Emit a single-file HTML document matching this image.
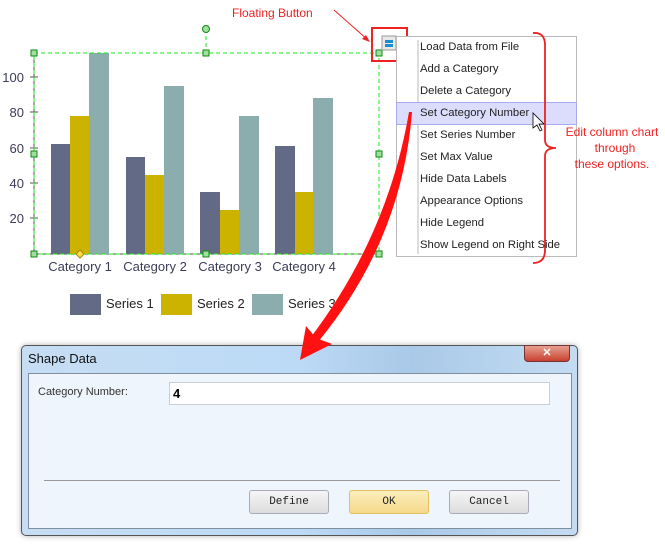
<!DOCTYPE html>
<html><head><meta charset="utf-8"><style>
html,body{margin:0;padding:0;background:#fff;}
body{width:665px;height:544px;position:relative;overflow:hidden;font-family:"Liberation Sans",sans-serif;}
.a{position:absolute;}
.mi{position:absolute;left:420px;font-size:11.3px;color:#222;}
.btn{position:absolute;top:490px;width:78px;height:22px;border:1px solid #aab;border-radius:3px;background:linear-gradient(#f6f6f6,#dcdcdc);font-family:"Liberation Mono",monospace;font-size:11px;text-align:center;line-height:22px;color:#222;}
</style></head><body>
<svg class="a" style="left:0;top:0" width="665" height="544">
<line x1="34" y1="53" x2="34" y2="254" stroke="#555"/>
<line x1="34" y1="254" x2="379" y2="254" stroke="#555"/>
<g stroke="#555"><line x1="30" y1="77" x2="38" y2="77"/><line x1="30" y1="112" x2="38" y2="112"/><line x1="30" y1="148" x2="38" y2="148"/><line x1="30" y1="183" x2="38" y2="183"/><line x1="30" y1="218" x2="38" y2="218"/></g>
<g font-size="13" fill="#3c3c58" text-anchor="end"><text x="24" y="82">100</text><text x="24" y="117">80</text><text x="24" y="153">60</text><text x="24" y="188">40</text><text x="24" y="223">20</text></g>
<rect x="51" y="144" width="19" height="110" fill="#636a86"/><rect x="70" y="116" width="19" height="138" fill="#cbb300"/><rect x="89" y="53" width="20" height="201" fill="#8badad"/>
<rect x="126" y="157" width="19" height="97" fill="#636a86"/><rect x="145" y="175" width="19" height="79" fill="#cbb300"/><rect x="164" y="86" width="20" height="168" fill="#8badad"/>
<rect x="200" y="192" width="20" height="62" fill="#636a86"/><rect x="220" y="210" width="19" height="44" fill="#cbb300"/><rect x="239" y="116" width="20" height="138" fill="#8badad"/>
<rect x="275" y="146" width="20" height="108" fill="#636a86"/><rect x="295" y="192" width="18" height="62" fill="#cbb300"/><rect x="313" y="98" width="20" height="156" fill="#8badad"/>
<g font-size="13" fill="#3c3c58" text-anchor="middle"><text x="80" y="271">Category 1</text><text x="155" y="271">Category 2</text><text x="230" y="271">Category 3</text><text x="304" y="271">Category 4</text></g>
<rect x="70" y="294" width="31" height="21" fill="#636a86"/><text x="106" y="308" font-size="13" fill="#222">Series 1</text>
<rect x="161" y="294" width="31" height="21" fill="#cbb300"/><text x="197" y="308" font-size="13" fill="#222">Series 2</text>
<rect x="252" y="294" width="31" height="21" fill="#8badad"/><text x="288" y="308" font-size="13" fill="#222">Series 3</text>
<g stroke="#11ee11" stroke-dasharray="4,3" fill="none"><rect x="34" y="53" width="345" height="201"/><line x1="206" y1="29" x2="206" y2="53"/></g>
<g fill="#9fe09f" stroke="#118811"><rect x="31" y="50" width="6" height="6"/><rect x="203" y="50" width="6" height="6"/><rect x="376" y="50" width="6" height="6"/><rect x="31" y="151" width="6" height="6"/><rect x="376" y="151" width="6" height="6"/><rect x="31" y="251" width="6" height="6"/><rect x="203" y="251" width="6" height="6"/><rect x="376" y="251" width="6" height="6"/><circle cx="206" cy="29" r="3.5"/></g>
<path d="M80 250 L84 254 L80 258 L76 254Z" fill="#ffdd44" stroke="#aa8800"/>
<rect x="372" y="28" width="35" height="33" fill="none" stroke="#ee2222" stroke-width="2"/>
<rect x="382" y="36" width="14" height="14" fill="#e8e8e8" stroke="#999"/>
<rect x="385" y="40" width="8" height="3" fill="#1a8fd0"/><rect x="385" y="44" width="8" height="3" fill="#1a8fd0"/>
<text x="232" y="17" font-size="12" fill="#ee2222">Floating Button</text>
<line x1="334" y1="10" x2="368" y2="40" stroke="#ee2222"/><path d="M370 42 L362 39 L366 35Z" fill="#ee2222"/>
<rect x="396.5" y="36.5" width="180" height="220" fill="#fff" stroke="#bbb"/>
<line x1="418" y1="40" x2="418" y2="254" stroke="#ddd" stroke-width="2"/>
<rect x="396.5" y="102.5" width="180" height="22" fill="#dcdcfc" stroke="#aaaaf0"/>
<path d="M533 113 L533 128 L537 125 L540 131 L542 130 L539 124 L544 124Z" fill="#fff" stroke="#000" stroke-width="0.8"/>
<path d="M533 33 Q545 32 545 45 L545 140 Q545 148 556 148 Q545 148 545 156 L545 250 Q545 263 533 263" fill="none" stroke="#ee2222" stroke-width="1.8"/>
<g font-size="12" fill="#ee2222" text-anchor="middle"><text x="612" y="136">Edit column chart</text><text x="615" y="152">through</text><text x="612" y="168">these options.</text></g>
</svg>
<div class="mi" style="top:41px">Load Data from File</div>
<div class="mi" style="top:63px">Add a Category</div>
<div class="mi" style="top:85px">Delete a Category</div>
<div class="mi" style="top:107px">Set Category Number</div>
<div class="mi" style="top:129px">Set Series Number</div>
<div class="mi" style="top:151px">Set Max Value</div>
<div class="mi" style="top:173px">Hide Data Labels</div>
<div class="mi" style="top:195px">Appearance Options</div>
<div class="mi" style="top:217px">Hide Legend</div>
<div class="mi" style="top:239px">Show Legend on Right Side</div>
<div class="a" style="left:21px;top:345px;width:555px;height:189px;border:1px solid #555;border-radius:5px;background:linear-gradient(90deg,#c6ddf3,#bcdaf6 50%,#a9c9e8 70%,#c4dcf2);box-shadow:0 0 6px rgba(0,0,0,.3);"></div>
<div class="a" style="left:28px;top:373px;width:542px;height:154px;border:1px solid #7f8f9f;background:#eef5fd;"></div>
<div class="a" style="left:28px;top:351px;font-size:13px;color:#111;">Shape Data</div>
<div class="a" style="left:524px;top:345px;width:44px;height:15px;border:1px solid #733;border-radius:0 0 4px 4px;background:linear-gradient(#e8a090,#c84030);color:#fff;font-size:11px;font-weight:bold;text-align:center;line-height:15px;">✕</div>
<div class="a" style="left:38px;top:386px;font-size:11px;color:#333;">Category Number:</div>
<div class="a" style="left:169px;top:382px;width:379px;height:21px;border:1px solid #ccd;background:#fff;font-size:13px;font-weight:bold;line-height:21px;text-indent:3px;">4</div>
<div class="a" style="left:44px;top:480px;width:516px;height:1px;background:#999;"></div>
<div class="btn" style="left:249px">Define</div>
<div class="btn" style="left:349px;border-color:#e0c060;background:linear-gradient(#fbeebb,#f5d98a);">OK</div>
<div class="btn" style="left:449px">Cancel</div>
<svg class="a" style="left:0;top:0" width="665" height="544">
<path d="M412 112 Q402 240 318 342 L311 337 Q388 235 409 112Z" fill="#ff1111"/>
<path d="M300 360 L306 326 L316 338 L332 344Z" fill="#ff1111"/>
</svg>
</body></html>
